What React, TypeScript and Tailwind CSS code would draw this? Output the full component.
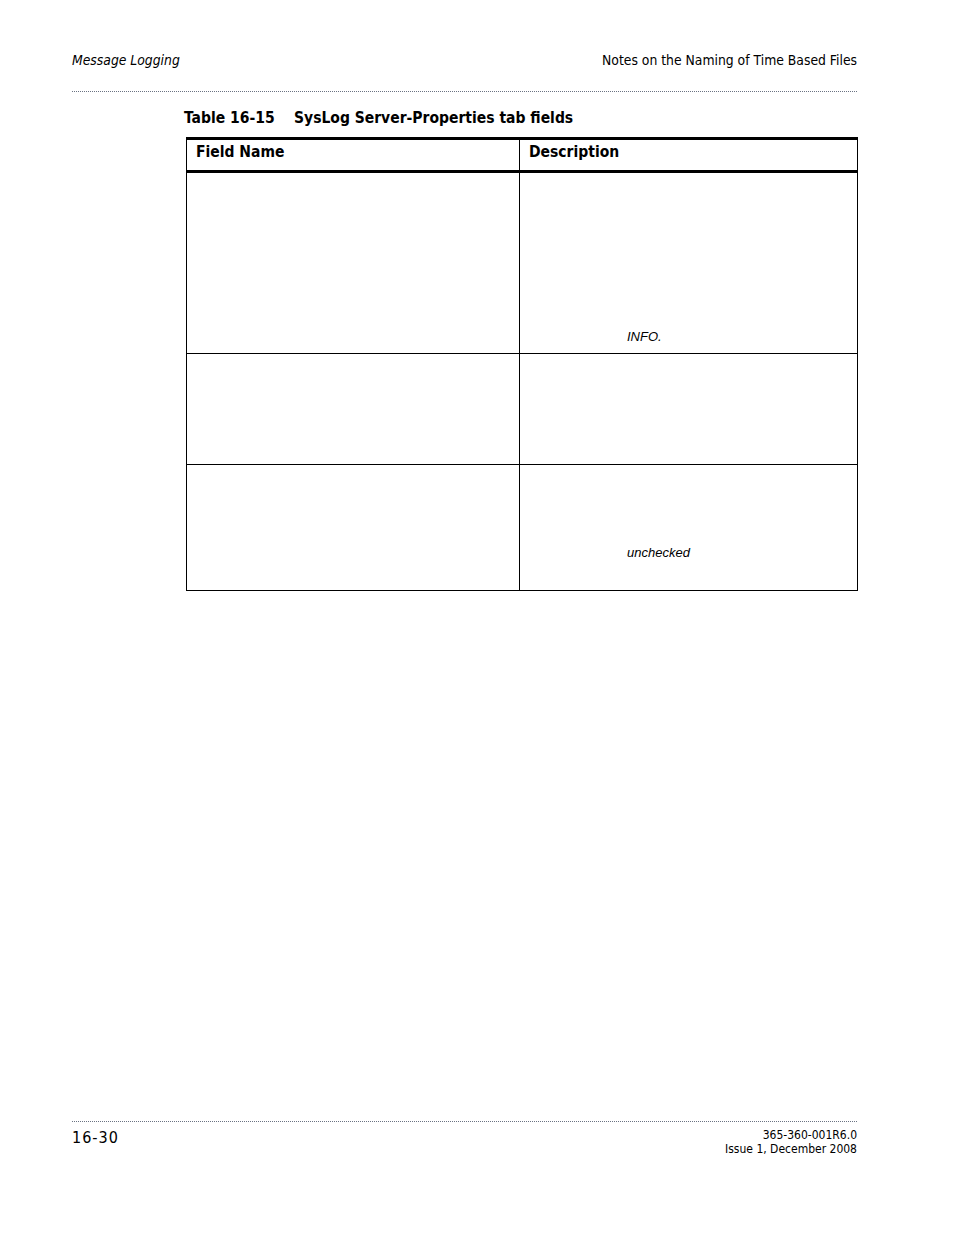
export default function App() {
  const rows = [
    { h: "h-[182px]", note: "INFO.", noteTop: "pt-[156px]" },
    { h: "h-[111px]", note: "", noteTop: "" },
    { h: "h-[126px]", note: "unchecked", noteTop: "pt-[80px]" },
  ];

  return (
    <div className="w-[954px] h-[1235px] bg-white text-black flex flex-col font-['DejaVu_Sans_Condensed',sans-serif]">
      {/* Page header */}
      <div className="flex justify-between pl-[72px] pr-[97px] pt-[51px] text-[13.8px] leading-[18px]">
        <span className="italic">Message Logging</span>
        <span>Notes on the Naming of Time Based Files</span>
      </div>
      <div className="ml-[72px] mr-[97px] mt-[22px] border-t border-dotted border-gray-500" />

      {/* Table title */}
      <div className="ml-[184px] mt-[15px] text-[15.5px] leading-[22px] font-bold">
        Table 16-15&nbsp;&nbsp;&nbsp; SysLog Server-Properties tab fields
      </div>

      {/* Table */}
      <table className="ml-[186px] mt-[8px] w-[672px] border-collapse">
        <thead>
          <tr className="h-[33px] border-t-[3px] border-b-[3px] border-black">
            <th className="w-[333px] border-l border-r border-black text-left font-bold text-[15.5px] px-[9px] pb-[5px]">
              Field Name
            </th>
            <th className="border-r border-black text-left font-bold text-[15.5px] px-[9px] pb-[5px]">
              Description
            </th>
          </tr>
        </thead>
        <tbody>
          {rows.map((r, i) => (
            <tr key={i} className={`${r.h} border-b border-black`}>
              <td className="border-l border-r border-black align-top" />
              <td className="border-r border-black align-top">
                {r.note && (
                  <div
                    className={`${r.noteTop} pl-[107px] italic text-[13px] leading-[16px] font-['Liberation_Sans',sans-serif]`}
                  >
                    {r.note}
                  </div>
                )}
              </td>
            </tr>
          ))}
        </tbody>
      </table>

      {/* Page footer */}
      <div className="mt-auto mb-[79px]">
        <div className="ml-[72px] mr-[97px] border-t border-dotted border-gray-500" />
        <div className="flex justify-between pl-[72px] pr-[97px] pt-[6px]">
          <span className="text-[16px] leading-[20px] tracking-[1px]">16-30</span>
          <div className="text-right text-[12px] leading-[14px]">
            <div>365-360-001R6.0</div>
            <div>Issue 1, December 2008</div>
          </div>
        </div>
      </div>
    </div>
  );
}
